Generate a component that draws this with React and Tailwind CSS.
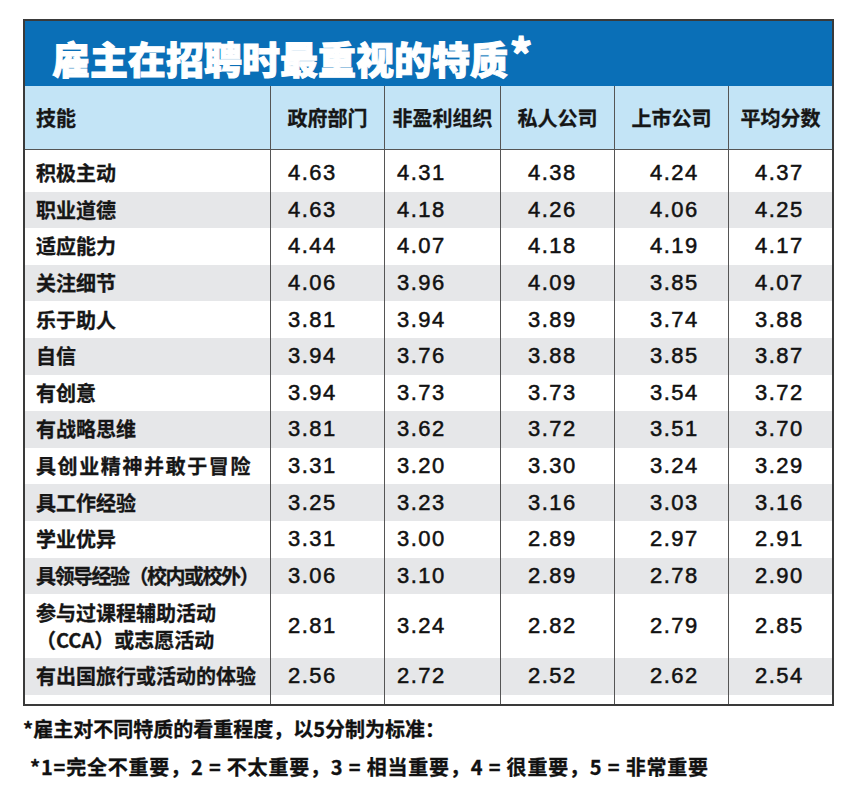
import React from 'react';

const cjk = "font-['Noto_Sans_CJK_SC',sans-serif]";
const num = "font-['Liberation_Sans','Noto_Sans_CJK_SC',sans-serif]";

const cols = 'grid grid-cols-[245px_114px_116px_114px_114px_104px]';

// left padding of the numbers in each column, the way the original sheet has them
const numPad = ['pl-[17px]', 'pl-[12px]', 'pl-[27px]', 'pl-[35px]', 'pl-[26px]'];

const headers = ['政府部门', '非盈利组织', '私人公司', '上市公司', '平均分数'];

const rows = [
  { skill: '积极主动', v: ['4.63', '4.31', '4.38', '4.24', '4.37'] },
  { skill: '职业道德', v: ['4.63', '4.18', '4.26', '4.06', '4.25'] },
  { skill: '适应能力', v: ['4.44', '4.07', '4.18', '4.19', '4.17'] },
  { skill: '关注细节', v: ['4.06', '3.96', '4.09', '3.85', '4.07'] },
  { skill: '乐于助人', v: ['3.81', '3.94', '3.89', '3.74', '3.88'] },
  { skill: '自信', v: ['3.94', '3.76', '3.88', '3.85', '3.87'] },
  { skill: '有创意', v: ['3.94', '3.73', '3.73', '3.54', '3.72'] },
  { skill: '有战略思维', v: ['3.81', '3.62', '3.72', '3.51', '3.70'] },
  { skill: '具创业精神并敢于冒险', v: ['3.31', '3.20', '3.30', '3.24', '3.29'], track: 'tracking-[1.6px]' },
  { skill: '具工作经验', v: ['3.25', '3.23', '3.16', '3.03', '3.16'] },
  { skill: '学业优异', v: ['3.31', '3.00', '2.89', '2.97', '2.91'] },
  { skill: '具领导经验（校内或校外）', v: ['3.06', '3.10', '2.89', '2.78', '2.90'], track: 'tracking-[-1.5px]' },
  { skill: ['参与过课程辅助活动', '（CCA）或志愿活动'], v: ['2.81', '3.24', '2.82', '2.79', '2.85'], tall: true },
  { skill: '有出国旅行或活动的体验', v: ['2.56', '2.72', '2.52', '2.62', '2.54'] },
];

function Spacer({ h }) {
  return (
    <div className={`${cols} ${h}`}>
      <div />
      {numPad.map((_, i) => (
        <div key={i} className="border-l border-[#555]" />
      ))}
    </div>
  );
}

function DataRow({ row, gray }) {
  const height = row.tall ? 'h-[64px]' : 'h-[36.6px]';
  return (
    <div className={`${cols} ${height} ${gray ? 'bg-[#e6e7e9]' : 'bg-white'}`}>
      <div className={`flex flex-col justify-center pl-[11px] text-[20px] font-bold text-[#161616] [-webkit-text-stroke:0.3px_#161616] ${cjk} ${row.track || ''}`}>
        {Array.isArray(row.skill) ? (
          row.skill.map((line) => (
            <span key={line} className="leading-[27px] whitespace-nowrap">{line}</span>
          ))
        ) : (
          <span className="leading-none whitespace-nowrap">{row.skill}</span>
        )}
      </div>
      {row.v.map((val, i) => (
        <div
          key={i}
          className={`flex items-center border-l border-[#555] ${numPad[i]} ${num} text-[22px] tracking-[1.5px] text-[#111] [-webkit-text-stroke:0.5px_#111] leading-none`}
        >
          {val}
        </div>
      ))}
    </div>
  );
}

export default function App() {
  return (
    <div className="w-[861px] h-[800px] bg-white pt-[19px] pl-[23px]">
      <div className="w-[811px] border-2 border-[#3a3a3a]">
        {/* title band */}
        <div className={`h-[65px] bg-[#0a6fb7] flex items-center pl-[27px] ${cjk}`}>
          <span className="text-white text-[38px] font-black leading-none [-webkit-text-stroke:1px_white]">
            雇主在招聘时最重视的特质<span className="text-[42px] align-[4px] pl-[2px]">*</span>
          </span>
        </div>

        {/* column headers */}
        <div className={`${cols} h-[64px] bg-[#c3e4f6] border-b border-[#555] ${cjk} text-[20px] font-bold text-[#161616] [-webkit-text-stroke:0.3px_#161616]`}>
          <div className="flex items-center pl-[11px]">技能</div>
          {headers.map((h) => (
            <div key={h} className="flex items-center justify-center border-l border-[#555] whitespace-nowrap">
              {h}
            </div>
          ))}
        </div>

        <Spacer h="h-[5px]" />
        {rows.map((row, i) => (
          <DataRow key={i} row={row} gray={i % 2 === 1} />
        ))}
        <Spacer h="h-[9px]" />
      </div>

      {/* note under the table */}
      <div className={`${cjk} font-bold text-[20px] text-[#111] [-webkit-text-stroke:0.3px_#111] mt-[4px]`}>
        <p className="leading-[38px] whitespace-nowrap">*雇主对不同特质的看重程度，以5分制为标准：</p>
        <p className="leading-[38px] whitespace-nowrap pl-[7px] tracking-[0.8px]">*1=完全不重要，2 = 不太重要，3 = 相当重要，4 = 很重要，5 = 非常重要</p>
      </div>
    </div>
  );
}
